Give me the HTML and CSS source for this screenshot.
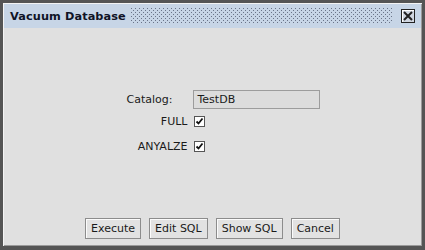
FILE: index.html
```html
<!DOCTYPE html>
<html>
<head>
<meta charset="utf-8">
<link rel="stylesheet" href="styles.css">
</head>
<body>
<div class="window">
  <div class="titlebar">
    <span class="title">Vacuum Database</span>
    <span class="dots"></span>
    <span class="close">
      <svg width="10" height="10" viewBox="0 0 10 10"><path d="M1 1 L9 9 M9 1 L1 9" stroke="#222" stroke-width="2"/></svg>
    </span>
  </div>
  <div class="content">
    <div class="form">
      <div class="row">
        <span class="label catalog">Catalog:</span>
        <span class="field">TestDB</span>
      </div>
      <div class="row">
        <span class="label">FULL</span>
        <span class="check"><svg width="9" height="9" viewBox="0 0 9 9"><path d="M1.5 4.5 L3.5 6.5 L7.5 1.5" stroke="#111" stroke-width="1.8" fill="none"/></svg></span>
      </div>
      <div class="row">
        <span class="label">ANYALZE</span>
        <span class="check"><svg width="9" height="9" viewBox="0 0 9 9"><path d="M1.5 4.5 L3.5 6.5 L7.5 1.5" stroke="#111" stroke-width="1.8" fill="none"/></svg></span>
      </div>
    </div>
    <div class="buttons">
      <button class="btn">Execute</button>
      <button class="btn">Edit SQL</button>
      <button class="btn">Show SQL</button>
      <button class="btn">Cancel</button>
    </div>
  </div>
</div>
</body>
</html>
```
FILE: styles.css
```css
html, body {
  margin: 0;
  padding: 0;
  background: #4a4a4a;
}
.window {
  width: 425px;
  height: 250px;
  box-sizing: border-box;
  border: 3px solid #555555;
  border-bottom-width: 4px;
  background: #e0e0e0;
  display: flex;
  flex-direction: column;
  box-shadow: inset 1px 1px 0 #f4f4f4, inset -1px -1px 0 #9a9a9a;
  font-family: "DejaVu Sans", Verdana, sans-serif;
  font-size: 11px;
  color: #1a1a1a;
}
.titlebar {
  height: 24px;
  margin: 1px 1px 0 1px;
  background: #c7d5e6;
  display: flex;
  align-items: center;
  padding: 0 6px 0 6px;
  gap: 5px;
}
.title {
  font-family: "DejaVu Sans", Verdana, sans-serif;
  font-weight: bold;
  font-size: 11.3px;
  color: #101426;
  letter-spacing: 0.1px;
}
.dots {
  flex: 1;
  height: 16px;
  background-image:
    radial-gradient(circle at 0.5px 0.5px, #6a7488 0.6px, transparent 0.9px),
    radial-gradient(circle at 0.5px 0.5px, #6a7488 0.6px, transparent 0.9px);
  background-size: 4px 4px, 4px 4px;
  background-position: 0 0, 2px 2px;
}
.close {
  width: 12px;
  height: 12px;
  border: 1px solid #222;
  box-shadow: inset 1px 1px 0 #fff;
  background: #d0d6e0;
  display: flex;
  align-items: center;
  justify-content: center;
  margin-left: 4px;
}
.content {
  flex: 1;
  display: flex;
  flex-direction: column;
  align-items: center;
}
.form {
  margin-top: 62px;
  display: flex;
  flex-direction: column;
  gap: 6px;
  margin-left: 22px;
}
.row {
  display: grid;
  grid-template-columns: 60px auto;
  align-items: center;
  column-gap: 5px;
}
.row + .row + .row { margin-top: 6px; }
.label {
  text-align: right;
}
.label.catalog {
  padding-right: 15px;
  margin-left: -15px;
}
.field {
  width: 121px;
  height: 17px;
  border: 1px solid #9c9c9c;
  background: #dcdcdc;
  padding-left: 4px;
  line-height: 17px;
  box-sizing: content-box;
}
.check {
  width: 9px;
  height: 9px;
  border: 1px solid #555;
  background: #fff;
  display: flex;
  align-items: center;
  justify-content: center;
  margin-left: 1px;
}
.buttons {
  margin-top: auto;
  margin-bottom: 7px;
  display: flex;
  gap: 8px;
}
.btn {
  font-family: "DejaVu Sans", Verdana, sans-serif;
  font-size: 11px;
  color: #1a1a1a;
  background: #e2e2e2;
  border: 1px solid #8c8c8c;
  box-shadow: inset 1px 1px 0 #fbfbfb;
  height: 21px;
  padding: 0 5px;
  margin: 0;
}
```
